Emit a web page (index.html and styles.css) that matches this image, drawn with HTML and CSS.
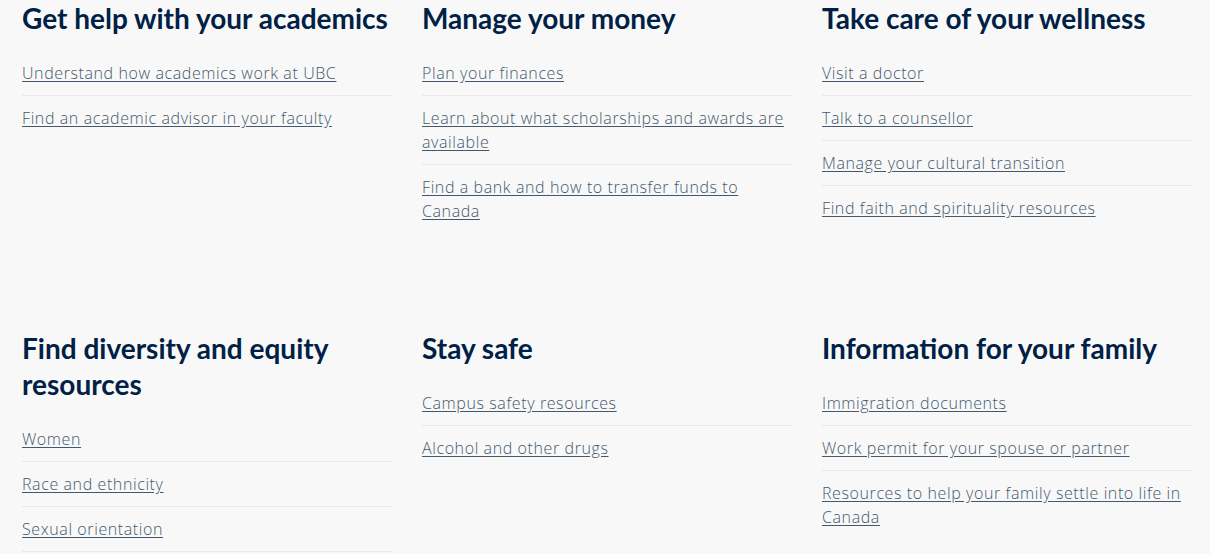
FILE: index.html
```html
<!DOCTYPE html>
<html lang="en">
<head>
    <meta charset="UTF-8">
    <meta name="viewport" content="width=device-width, initial-scale=1.0">
    <title>Student resources</title>
    <link rel="stylesheet" href="styles.css">
</head>
<body>
    <div class="container">
        <div class="block">
            <h2>Get help with your academics</h2>
            <ul class="links">
                <li><a href="#">Understand how academics work at UBC</a></li>
                <li><a href="#">Find an academic advisor in your faculty</a></li>
            </ul>
        </div>
        <div class="block">
            <h2>Manage your money</h2>
            <ul class="links">
                <li><a href="#">Plan your finances</a></li>
                <li><a href="#">Learn about what scholarships and awards are available</a></li>
                <li><a href="#">Find a bank and how to transfer funds to Canada</a></li>
            </ul>
        </div>
        <div class="block">
            <h2>Take care of your wellness</h2>
            <ul class="links">
                <li><a href="#">Visit a doctor</a></li>
                <li><a href="#">Talk to a counsellor</a></li>
                <li><a href="#">Manage your cultural transition</a></li>
                <li><a href="#">Find faith and spirituality resources</a></li>
            </ul>
        </div>
        <div class="block">
            <h2>Find diversity and equity resources</h2>
            <ul class="links">
                <li><a href="#">Women</a></li>
                <li><a href="#">Race and ethnicity</a></li>
                <li><a href="#">Sexual orientation</a></li>
                <li><a href="#">Gender identity</a></li>
            </ul>
        </div>
        <div class="block">
            <h2>Stay safe</h2>
            <ul class="links">
                <li><a href="#">Campus safety resources</a></li>
                <li><a href="#">Alcohol and other drugs</a></li>
            </ul>
        </div>
        <div class="block">
            <h2>Information for your family</h2>
            <ul class="links">
                <li><a href="#">Immigration documents</a></li>
                <li><a href="#">Work permit for your spouse or partner</a></li>
                <li><a href="#">Resources to help your family settle into life in Canada</a></li>
            </ul>
        </div>
    </div>
</body>
</html>
```

FILE: styles.css
```css
body {
    margin: 0;
    font-family: "Open Sans", Lato, sans-serif;
    background: #f8f8f9;
    color: #002145;
}
.container {
    display: grid;
    grid-template-columns: repeat(3, 370px);
    column-gap: 30px;
    row-gap: 97px;
    padding-left: 22px;
}
.block h2 {
    margin: 0 0 15px;
    font-family: Lato, "Open Sans", sans-serif;
    font-size: 28px;
    line-height: 36px;
    font-weight: 700;
    color: #002145;
}
.links {
    list-style: none;
    margin: 0;
    padding: 0;
}
.links li {
    padding: 10px 0;
    border-top: 1px solid #e6e8ea;
    font-size: 16px;
    line-height: 24px;
}
.links li:first-child {
    border-top: none;
}
.links a {
    color: #45586b;
    font-weight: 300;
    letter-spacing: 0.6px;
    text-decoration: underline;
    text-underline-offset: 2px;
}
```
